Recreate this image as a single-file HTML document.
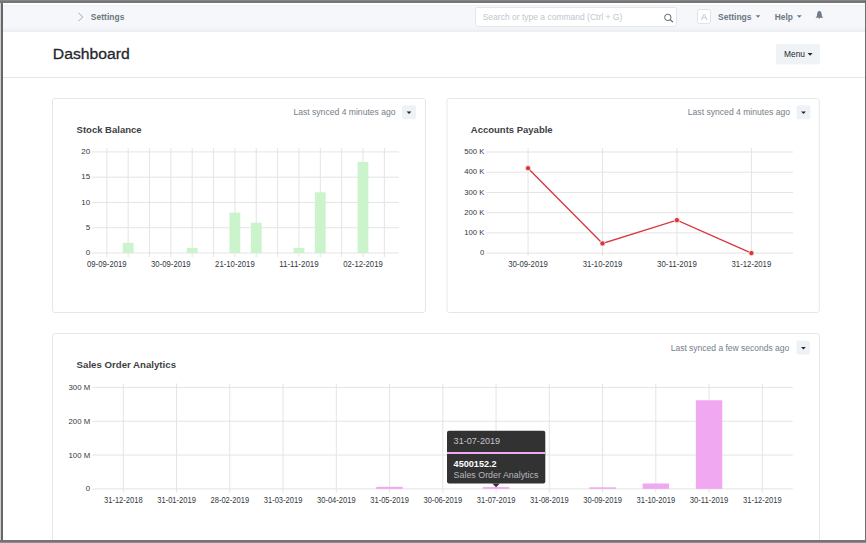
<!DOCTYPE html>
<html>
<head>
<meta charset="utf-8">
<style>
html,body{margin:0;padding:0;width:866px;height:543px;overflow:hidden;background:#fff;}
svg{display:block;font-family:"Liberation Sans",sans-serif;}
</style>
</head>
<body>
<svg width="866" height="543" viewBox="0 0 866 543">
<!-- page bg -->
<rect x="0" y="0" width="866" height="543" fill="#ffffff"/>
<!-- navbar -->
<defs><linearGradient id="nb" x1="0" y1="0" x2="0" y2="1"><stop offset="0" stop-color="#f5f7fa"/><stop offset="1" stop-color="#eef0f4"/></linearGradient></defs>
<rect x="3" y="5" width="862" height="27" fill="#f5f7fa"/>
<rect x="3" y="5" width="862" height="1" fill="#eff1f5"/>
<rect x="3" y="26" width="862" height="5" fill="url(#nb)"/>
<rect x="3" y="31" width="862" height="1" fill="#ebeef2"/>
<!-- breadcrumb -->
<path d="M78.6 12.9 L82.7 17 L78.6 21.1" fill="none" stroke="#a2aab3" stroke-width="1"/>
<text x="90.8" y="20" font-size="8.4" font-weight="700" fill="#6c7680" textLength="33.6">Settings</text>
<!-- search -->
<rect x="475.5" y="7.5" width="201" height="19" rx="2" fill="#ffffff" stroke="#e2e6ea" stroke-width="1"/>
<text x="482.7" y="20" font-size="8.5" fill="#c0c6cc">Search or type a command (Ctrl + G)</text>
<circle cx="667.8" cy="17.4" r="3.2" fill="none" stroke="#4c5661" stroke-width="0.9"/>
<path d="M670.1 19.7 L672.9 22.2" stroke="#4c5661" stroke-width="1.1"/>
<!-- avatar -->
<rect x="697.5" y="9.5" width="13" height="14" rx="2" fill="#ffffff" stroke="#dfe3e8" stroke-width="1"/>
<text x="704" y="19.9" font-size="9.3" fill="#b3bac2" text-anchor="middle">A</text>
<!-- nav settings -->
<text x="718" y="19.5" font-size="8.5" font-weight="700" fill="#6c7680">Settings</text>
<path d="M755.6 15.3 L760.4 15.3 L758 17.8 Z" fill="#6c7680"/>
<text x="774.8" y="19.5" font-size="8.3" font-weight="700" fill="#6c7680">Help</text>
<path d="M796.8 15.3 L801.8 15.3 L799.3 17.8 Z" fill="#6c7680"/>
<!-- bell -->
<path d="M819.4 10.8 C818 11.1 817.2 12.4 817.1 14.2 L816.8 16.2 L815.5 17.7 L823.3 17.7 L822 16.2 L821.7 14.2 C821.6 12.4 820.8 11.1 819.4 10.8 Z" fill="#6f7b87"/>
<path d="M818.3 17.6 L820.5 17.6 L819.4 19 Z" fill="#6f7b87"/>

<!-- page head -->
<text x="52.8" y="59.4" font-size="15.4" fill="#1f272e" stroke="#1f272e" stroke-width="0.3" textLength="77" lengthAdjust="spacingAndGlyphs">Dashboard</text>
<rect x="776" y="44" width="44" height="20.5" rx="2" fill="#f0f3f6"/>
<text x="784" y="57.1" font-size="8.4" fill="#1f272e">Menu</text>
<path d="M807.6 53 L812.6 53 L810.1 55.8 Z" fill="#1f272e"/>
<rect x="3" y="77" width="862" height="1" fill="#e2e6ea"/>

<!-- card 1 -->
<rect x="52.5" y="98.5" width="373" height="214" rx="2.5" fill="#ffffff" stroke="#e4e7ea" stroke-width="1"/>
<text x="293.4" y="115.4" font-size="8.6" fill="#737e8a">Last synced 4 minutes ago</text>
<rect x="402" y="105.2" width="14" height="14" rx="2" fill="#eef2f6"/>
<path d="M406.6 111.5 L411.4 111.5 L409 114.1 Z" fill="#1f272e"/>
<text x="76.6" y="132.7" font-size="9.5" font-weight="700" fill="#3d4145">Stock Balance</text>
<g><rect x="92" y="151.40" width="307" height="1" fill="#e4e4e4"/>
<rect x="92" y="176.68" width="307" height="1" fill="#e4e4e4"/>
<rect x="92" y="201.95" width="307" height="1" fill="#e4e4e4"/>
<rect x="92" y="227.22" width="307" height="1" fill="#e4e4e4"/>
<rect x="92" y="252.50" width="307" height="1" fill="#e4e4e4"/>
<rect x="106.30" y="148" width="1" height="109" fill="#e4e4e4"/>
<rect x="127.65" y="148" width="1" height="109" fill="#e4e4e4"/>
<rect x="149.00" y="148" width="1" height="109" fill="#e4e4e4"/>
<rect x="170.35" y="148" width="1" height="109" fill="#e4e4e4"/>
<rect x="191.70" y="148" width="1" height="109" fill="#e4e4e4"/>
<rect x="213.05" y="148" width="1" height="109" fill="#e4e4e4"/>
<rect x="234.40" y="148" width="1" height="109" fill="#e4e4e4"/>
<rect x="255.75" y="148" width="1" height="109" fill="#e4e4e4"/>
<rect x="277.10" y="148" width="1" height="109" fill="#e4e4e4"/>
<rect x="298.45" y="148" width="1" height="109" fill="#e4e4e4"/>
<rect x="319.80" y="148" width="1" height="109" fill="#e4e4e4"/>
<rect x="341.15" y="148" width="1" height="109" fill="#e4e4e4"/>
<rect x="362.50" y="148" width="1" height="109" fill="#e4e4e4"/>
<rect x="383.85" y="148" width="1" height="109" fill="#e4e4e4"/>
<rect x="122.75" y="242.89" width="10.8" height="10.11" fill="#cbf3cc"/>
<rect x="186.80" y="247.94" width="10.8" height="5.06" fill="#cbf3cc"/>
<rect x="229.50" y="212.56" width="10.8" height="40.44" fill="#cbf3cc"/>
<rect x="250.85" y="222.67" width="10.8" height="30.33" fill="#cbf3cc"/>
<rect x="293.55" y="247.94" width="10.8" height="5.06" fill="#cbf3cc"/>
<rect x="314.90" y="192.34" width="10.8" height="60.66" fill="#cbf3cc"/>
<rect x="357.60" y="162.01" width="10.8" height="90.99" fill="#cbf3cc"/>
<text x="90.2" y="154.20" font-size="8.0" fill="#35383c" text-anchor="end">20</text>
<text x="90.2" y="179.48" font-size="8.0" fill="#35383c" text-anchor="end">15</text>
<text x="90.2" y="204.75" font-size="8.0" fill="#35383c" text-anchor="end">10</text>
<text x="90.2" y="230.03" font-size="8.0" fill="#35383c" text-anchor="end">5</text>
<text x="90.2" y="255.30" font-size="8.0" fill="#35383c" text-anchor="end">0</text>
<text x="106.80" y="267" font-size="8.5" fill="#35383c" text-anchor="middle" textLength="39.6" lengthAdjust="spacingAndGlyphs">09-09-2019</text>
<text x="170.85" y="267" font-size="8.5" fill="#35383c" text-anchor="middle" textLength="39.6" lengthAdjust="spacingAndGlyphs">30-09-2019</text>
<text x="234.90" y="267" font-size="8.5" fill="#35383c" text-anchor="middle" textLength="39.6" lengthAdjust="spacingAndGlyphs">21-10-2019</text>
<text x="298.95" y="267" font-size="8.5" fill="#35383c" text-anchor="middle" textLength="39.6" lengthAdjust="spacingAndGlyphs">11-11-2019</text>
<text x="363.00" y="267" font-size="8.5" fill="#35383c" text-anchor="middle" textLength="39.6" lengthAdjust="spacingAndGlyphs">02-12-2019</text></g>

<!-- card 2 -->
<rect x="447" y="98.5" width="372.3" height="214" rx="2.5" fill="#ffffff" stroke="#e4e7ea" stroke-width="1"/>
<text x="687.8" y="115.4" font-size="8.6" fill="#737e8a">Last synced 4 minutes ago</text>
<rect x="796.5" y="105.2" width="14" height="14" rx="2" fill="#eef2f6"/>
<path d="M801.1 111.5 L805.9 111.5 L803.5 114.1 Z" fill="#1f272e"/>
<text x="470.8" y="132.7" font-size="9.5" font-weight="700" fill="#3d4145">Accounts Payable</text>
<g><rect x="486" y="151.50" width="307" height="1" fill="#e4e4e4"/>
<rect x="486" y="171.72" width="307" height="1" fill="#e4e4e4"/>
<rect x="486" y="191.94" width="307" height="1" fill="#e4e4e4"/>
<rect x="486" y="212.16" width="307" height="1" fill="#e4e4e4"/>
<rect x="486" y="232.38" width="307" height="1" fill="#e4e4e4"/>
<rect x="486" y="252.60" width="307" height="1" fill="#e4e4e4"/>
<rect x="527.55" y="148" width="1" height="108" fill="#e4e4e4"/>
<rect x="602.00" y="148" width="1" height="108" fill="#e4e4e4"/>
<rect x="676.45" y="148" width="1" height="108" fill="#e4e4e4"/>
<rect x="750.90" y="148" width="1" height="108" fill="#e4e4e4"/>
<polyline points="528.05,168.18 602.50,243.39 676.95,220.14 751.40,253.10" fill="none" stroke="#d9353d" stroke-width="1.3"/>
<circle cx="528.05" cy="168.18" r="2.6" fill="#d9353d" stroke="#ffffff" stroke-width="0.7"/>
<circle cx="602.50" cy="243.39" r="2.6" fill="#d9353d" stroke="#ffffff" stroke-width="0.7"/>
<circle cx="676.95" cy="220.14" r="2.6" fill="#d9353d" stroke="#ffffff" stroke-width="0.7"/>
<circle cx="751.40" cy="253.10" r="2.6" fill="#d9353d" stroke="#ffffff" stroke-width="0.7"/>
<text x="484.4" y="154.20" font-size="7.7" fill="#35383c" text-anchor="end">500 K</text>
<text x="484.4" y="174.42" font-size="7.7" fill="#35383c" text-anchor="end">400 K</text>
<text x="484.4" y="194.64" font-size="7.7" fill="#35383c" text-anchor="end">300 K</text>
<text x="484.4" y="214.86" font-size="7.7" fill="#35383c" text-anchor="end">200 K</text>
<text x="484.4" y="235.08" font-size="7.7" fill="#35383c" text-anchor="end">100 K</text>
<text x="484.4" y="255.30" font-size="7.7" fill="#35383c" text-anchor="end">0</text>
<text x="528.05" y="267" font-size="8.5" fill="#35383c" text-anchor="middle" textLength="39.7" lengthAdjust="spacingAndGlyphs">30-09-2019</text>
<text x="602.50" y="267" font-size="8.5" fill="#35383c" text-anchor="middle" textLength="39.7" lengthAdjust="spacingAndGlyphs">31-10-2019</text>
<text x="676.95" y="267" font-size="8.5" fill="#35383c" text-anchor="middle" textLength="39.7" lengthAdjust="spacingAndGlyphs">30-11-2019</text>
<text x="751.40" y="267" font-size="8.5" fill="#35383c" text-anchor="middle" textLength="39.7" lengthAdjust="spacingAndGlyphs">31-12-2019</text></g>

<!-- card 3 -->
<rect x="52.5" y="333.5" width="767" height="260" rx="2.5" fill="#ffffff" stroke="#e4e7ea" stroke-width="1"/>
<text x="670.7" y="350.7" font-size="8.5" fill="#737e8a">Last synced a few seconds ago</text>
<rect x="796.5" y="340.6" width="13.5" height="14" rx="2" fill="#eef2f6"/>
<path d="M801 347 L805.8 347 L803.4 349.6 Z" fill="#1f272e"/>
<text x="76.6" y="368.4" font-size="9.6" font-weight="700" fill="#3d4145" textLength="99.4" lengthAdjust="spacingAndGlyphs">Sales Order Analytics</text>
<g><rect x="92.3" y="386.90" width="700.5" height="1" fill="#e4e4e4"/>
<rect x="92.3" y="420.73" width="700.5" height="1" fill="#e4e4e4"/>
<rect x="92.3" y="454.56" width="700.5" height="1" fill="#e4e4e4"/>
<rect x="92.3" y="488.39" width="700.5" height="1" fill="#e4e4e4"/>
<rect x="122.80" y="383.5" width="1" height="109" fill="#e4e4e4"/>
<rect x="176.05" y="383.5" width="1" height="109" fill="#e4e4e4"/>
<rect x="229.30" y="383.5" width="1" height="109" fill="#e4e4e4"/>
<rect x="282.55" y="383.5" width="1" height="109" fill="#e4e4e4"/>
<rect x="335.80" y="383.5" width="1" height="109" fill="#e4e4e4"/>
<rect x="389.05" y="383.5" width="1" height="109" fill="#e4e4e4"/>
<rect x="442.30" y="383.5" width="1" height="109" fill="#e4e4e4"/>
<rect x="495.55" y="383.5" width="1" height="109" fill="#e4e4e4"/>
<rect x="548.80" y="383.5" width="1" height="109" fill="#e4e4e4"/>
<rect x="602.05" y="383.5" width="1" height="109" fill="#e4e4e4"/>
<rect x="655.30" y="383.5" width="1" height="109" fill="#e4e4e4"/>
<rect x="708.55" y="383.5" width="1" height="109" fill="#e4e4e4"/>
<rect x="761.80" y="383.5" width="1" height="109" fill="#e4e4e4"/>
<rect x="376.35" y="486.80" width="26.4" height="2.10" fill="#f0a8f0"/>
<rect x="482.85" y="487.10" width="26.4" height="1.80" fill="#f0a8f0"/>
<rect x="589.35" y="487.30" width="26.4" height="1.60" fill="#f0a8f0"/>
<rect x="642.60" y="483.49" width="26.4" height="5.41" fill="#f0a8f0"/>
<rect x="695.85" y="400.27" width="26.4" height="88.63" fill="#f0a8f0"/>
<text x="90.2" y="390.00" font-size="7.8" fill="#35383c" text-anchor="end">300 M</text>
<text x="90.2" y="423.83" font-size="7.8" fill="#35383c" text-anchor="end">200 M</text>
<text x="90.2" y="457.66" font-size="7.8" fill="#35383c" text-anchor="end">100 M</text>
<text x="90.2" y="491.49" font-size="7.8" fill="#35383c" text-anchor="end">0</text>
<text x="123.30" y="502.6" font-size="8.3" fill="#35383c" text-anchor="middle" textLength="38.6" lengthAdjust="spacingAndGlyphs">31-12-2018</text>
<text x="176.55" y="502.6" font-size="8.3" fill="#35383c" text-anchor="middle" textLength="38.6" lengthAdjust="spacingAndGlyphs">31-01-2019</text>
<text x="229.80" y="502.6" font-size="8.3" fill="#35383c" text-anchor="middle" textLength="38.6" lengthAdjust="spacingAndGlyphs">28-02-2019</text>
<text x="283.05" y="502.6" font-size="8.3" fill="#35383c" text-anchor="middle" textLength="38.6" lengthAdjust="spacingAndGlyphs">31-03-2019</text>
<text x="336.30" y="502.6" font-size="8.3" fill="#35383c" text-anchor="middle" textLength="38.6" lengthAdjust="spacingAndGlyphs">30-04-2019</text>
<text x="389.55" y="502.6" font-size="8.3" fill="#35383c" text-anchor="middle" textLength="38.6" lengthAdjust="spacingAndGlyphs">31-05-2019</text>
<text x="442.80" y="502.6" font-size="8.3" fill="#35383c" text-anchor="middle" textLength="38.6" lengthAdjust="spacingAndGlyphs">30-06-2019</text>
<text x="496.05" y="502.6" font-size="8.3" fill="#35383c" text-anchor="middle" textLength="38.6" lengthAdjust="spacingAndGlyphs">31-07-2019</text>
<text x="549.30" y="502.6" font-size="8.3" fill="#35383c" text-anchor="middle" textLength="38.6" lengthAdjust="spacingAndGlyphs">31-08-2019</text>
<text x="602.55" y="502.6" font-size="8.3" fill="#35383c" text-anchor="middle" textLength="38.6" lengthAdjust="spacingAndGlyphs">30-09-2019</text>
<text x="655.80" y="502.6" font-size="8.3" fill="#35383c" text-anchor="middle" textLength="38.6" lengthAdjust="spacingAndGlyphs">31-10-2019</text>
<text x="709.05" y="502.6" font-size="8.3" fill="#35383c" text-anchor="middle" textLength="38.6" lengthAdjust="spacingAndGlyphs">30-11-2019</text>
<text x="762.30" y="502.6" font-size="8.3" fill="#35383c" text-anchor="middle" textLength="38.6" lengthAdjust="spacingAndGlyphs">31-12-2019</text>
<rect x="447" y="430.8" width="98.3" height="52.7" rx="2" fill="#323233"/>
<rect x="447" y="452" width="98.3" height="2" fill="#f0a8f0"/>
<path d="M492.3 483.4 L496.1 487.2 L499.9 483.4 Z" fill="#323233"/>
<text x="453.6" y="444.4" font-size="9.1" fill="#c4c4c6">31-07-2019</text>
<text x="453.6" y="466.6" font-size="9.1" font-weight="700" fill="#ffffff">4500152.2</text>
<text x="453.6" y="477.9" font-size="8.9" fill="#b4b8be">Sales Order Analytics</text></g>

<!-- frame -->
<rect x="0" y="0" width="866" height="3" fill="#757575"/>
<rect x="0" y="0" width="866" height="1" fill="#858585"/>
<rect x="0" y="3" width="1" height="540" fill="#cfcfcf"/>
<rect x="1" y="3" width="2" height="540" fill="#666666"/>
<rect x="865" y="0" width="1" height="543" fill="#6e6e6e"/>
<rect x="0" y="540" width="866" height="2" fill="#747474"/>
<rect x="0" y="542" width="866" height="1" fill="#8e8e8e"/>
</svg>
</body>
</html>
